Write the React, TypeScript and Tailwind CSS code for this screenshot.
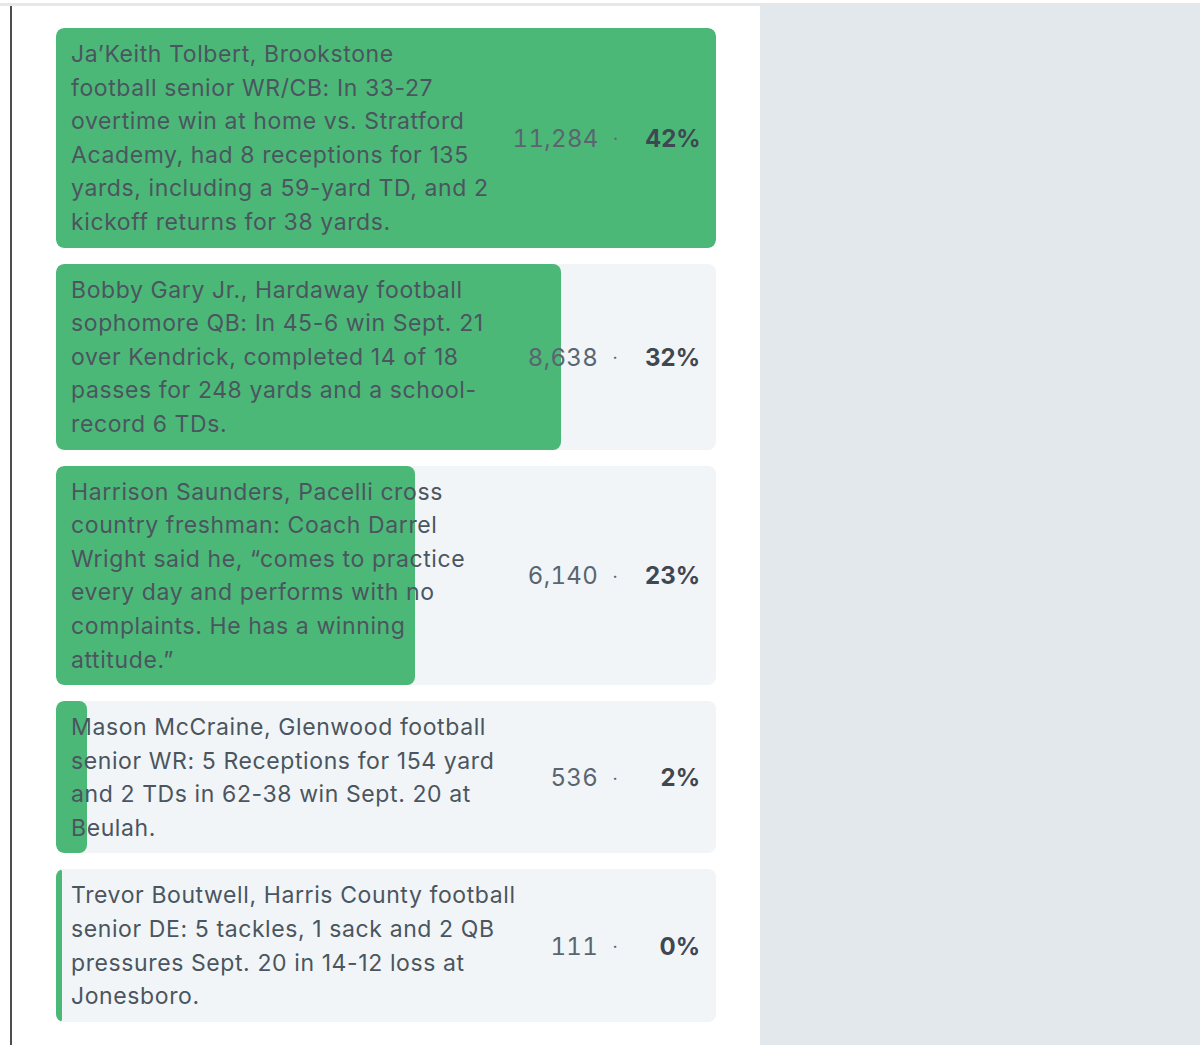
import React from "react";

type Entry = {
  lines: string[];
  votes: number;
};

const entries: Entry[] = [
  {
    lines: [
      "Ja\u2019Keith Tolbert, Brookstone",
      "football senior WR/CB: In 33-27",
      "overtime win at home vs. Stratford",
      "Academy, had 8 receptions for 135",
      "yards, including a 59-yard TD, and 2",
      "kickoff returns for 38 yards.",
    ],
    votes: 11284,
  },
  {
    lines: [
      "Bobby Gary Jr., Hardaway football",
      "sophomore QB: In 45-6 win Sept. 21",
      "over Kendrick, completed 14 of 18",
      "passes for 248 yards and a school-",
      "record 6 TDs.",
    ],
    votes: 8638,
  },
  {
    lines: [
      "Harrison Saunders, Pacelli cross",
      "country freshman: Coach Darrel",
      "Wright said he, \u201ccomes to practice",
      "every day and performs with no",
      "complaints. He has a winning",
      "attitude.\u201d",
    ],
    votes: 6140,
  },
  {
    lines: [
      "Mason McCraine, Glenwood football",
      "senior WR: 5 Receptions for 154 yard",
      "and 2 TDs in 62-38 win Sept. 20 at",
      "Beulah.",
    ],
    votes: 536,
  },
  {
    lines: [
      "Trevor Boutwell, Harris County football",
      "senior DE: 5 tackles, 1 sack and 2 QB",
      "pressures Sept. 20 in 14-12 loss at",
      "Jonesboro.",
    ],
    votes: 111,
  },
];

function ResultRow({ entry, total, max }: { entry: Entry; total: number; max: number }) {
  const pct = Math.round((entry.votes / total) * 100);
  const barWidth = Math.max(0.75, (entry.votes / max) * 100);

  return (
    <div className="relative rounded-lg bg-[#f1f5f7] overflow-hidden">
      <div
        className="absolute left-0 top-0 bottom-0 rounded-lg bg-[#4cb877]"
        style={{ width: `${barWidth}%` }}
      />
      <div className="relative flex items-center gap-[24px] pl-[15px] pr-[16px] pt-[10px] pb-[8px]">
        <p className="flex-1 text-[23px] leading-[33.6px] tracking-[0.6px] text-[#4b5560]">
          {entry.lines.map((line, i) => (
            <span key={i} className="block whitespace-nowrap">
              {line}
            </span>
          ))}
        </p>
        <div className="flex items-center text-[24px]">
          <span className="tabular-nums tracking-[0.3px] text-[#5b6570]">
            {entry.votes.toLocaleString("en-US")}
          </span>
          <span className="w-[34px] text-center text-[18px] text-[#5b6570]">·</span>
          <span className="w-[68px] text-right font-bold text-[#3f4752]">{pct}%</span>
        </div>
      </div>
    </div>
  );
}

export default function App() {
  const total = entries.reduce((sum, e) => sum + e.votes, 0);
  const max = Math.max(...entries.map((e) => e.votes));

  return (
    <div
      className="min-h-[1045px] bg-white pt-[3px]"
      style={{ fontFamily: "Inter, 'Open Sans', sans-serif" }}
    >
      <div className="flex min-h-[1042px] border-t-[3px] border-[#e6e7e8]">
        <div className="w-[760px] pl-[10px]">
          <div className="h-full border-l-2 border-[#4d4d4d] pl-[44px] pr-[44px] pt-[22px]">
            <div className="flex flex-col gap-4">
              {entries.map((entry, i) => (
                <ResultRow key={i} entry={entry} total={total} max={max} />
              ))}
            </div>
          </div>
        </div>
        <div className="flex-1 bg-[#e2e8ec]" />
      </div>
    </div>
  );
}
